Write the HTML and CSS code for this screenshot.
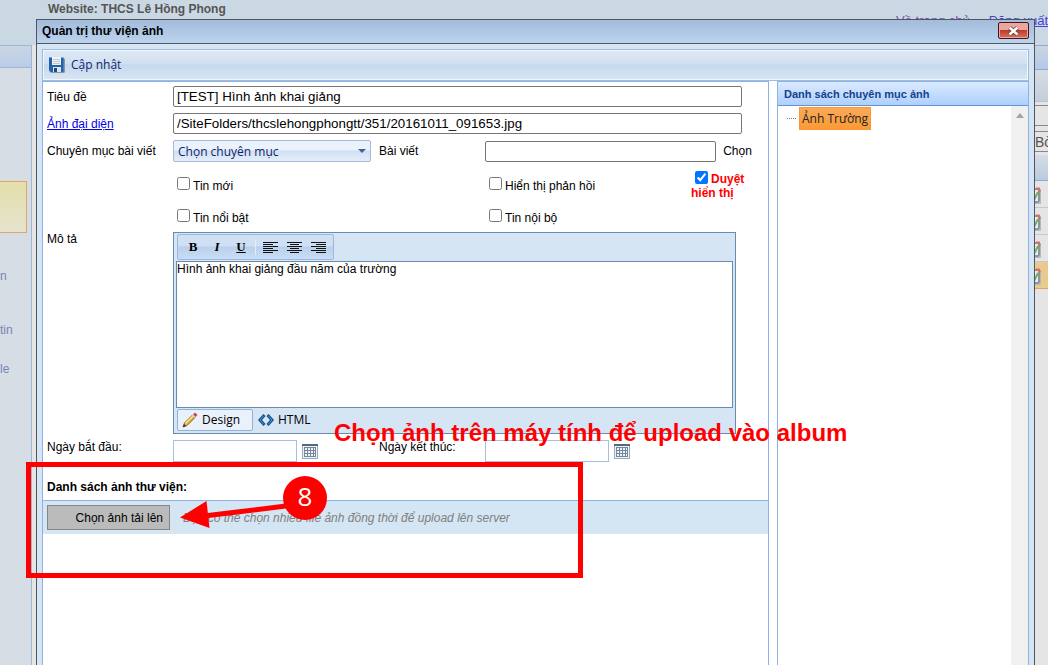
FILE: index.html
```html
<!DOCTYPE html>
<html lang="vi">
<head>
<meta charset="utf-8">
<title>Quản trị thư viện ảnh</title>
<meta name="viewport" content="width=device-width, initial-scale=1">
<link rel="stylesheet" href="styles.css">
</head>
<body>
<svg width="0" height="0" class="defs" aria-hidden="true">
  <defs>
    <symbol id="calendar" viewBox="0 0 16 15">
      <rect x="0.5" y="0.5" width="15" height="14" fill="#eef2f7" stroke="#9aabbd"/>
      <path d="M0 1h16" stroke="#54687f" stroke-width="2"/>
      <path d="M2 3.500h12M2 6.500h12M2 9.500h12M2 12.500h12M2.500 3v10M5.500 3v10M8.500 3v10M11.500 3v10M13.500 3v10" stroke="#75879a" fill="none"/>
    </symbol>
    <symbol id="edit" viewBox="0 0 18 18">
      <rect x="3" y="3" width="11" height="13" rx="1" fill="#e9edf2" stroke="#8c949e" stroke-width="2"/>
      <path d="M15.500 4v13.500H6" fill="none" stroke="#b4b8be"/>
      <path d="M8 10l2 2 3-6" fill="none" stroke="#6fb557" stroke-width="2"/>
      <path d="M11 2.500h3l1 3" fill="none" stroke="#d9705c" stroke-width="2"/>
    </symbol>
  </defs>
</svg>

<div class="page">
  <header class="page-head">
    <span class="site">Website: THCS Lê Hồng Phong</span>
    <nav class="page-nav">
      <a class="visited" href="#">Về trang chủ</a>
      <a href="#">Đăng xuất</a>
    </nav>
  </header>
  <div class="page-body">
    <aside class="side">
      <div class="side-head"></div>
      <div class="side-active"></div>
      <ul class="side-menu">
        <li><a href="#">n</a></li>
        <li><a href="#">tin</a></li>
        <li><a href="#">le</a></li>
      </ul>
    </aside>
    <main class="list">
      <div class="list-head"></div>
      <div class="list-tools"></div>
      <div class="list-box"></div>
      <button class="list-button" type="button">Bở</button>
      <div class="list-cols"></div>
      <div class="list-row"><svg width="18" height="18"><use href="#edit"/></svg></div>
      <div class="list-row"><svg width="18" height="18"><use href="#edit"/></svg></div>
      <div class="list-row"><svg width="18" height="18"><use href="#edit"/></svg></div>
      <div class="list-row selected"><svg width="18" height="18"><use href="#edit"/></svg></div>
    </main>
  </div>
</div>

<section class="dialog" role="dialog" aria-labelledby="dialog-title">
  <div class="titlebar">
    <h1 id="dialog-title">Quản trị thư viện ảnh</h1>
    <button class="close" type="button" aria-label="Đóng">
      <svg width="13" height="10" viewBox="0 0 13 10"><path d="M2.500 1.500l8 7M10.500 1.500l-8 7" stroke="#6b3535" stroke-width="4"/><path d="M2.500 1.500l8 7M10.500 1.500l-8 7" stroke="#fff" stroke-width="2.500"/></svg>
    </button>
  </div>
  <div class="dialog-body">
    <div class="toolbar">
      <button class="save" type="button">
        <svg width="16" height="16" viewBox="0 0 16 16"><path d="M1 1h13l2 1v13l-1 1H2l-2-2V2z" fill="#8a96a6"/><path d="M0 0.500h14.500V15H2l-2-2z" fill="#1f62ad"/><path d="M3 0h9v8H3z" fill="#f1f2f3"/><path d="M4 2.500h7M4 4.500h7M4 6.500h7" stroke="#c5c9ce"/><path d="M4 10h8v5H4z" fill="#dce6f0"/><path d="M5 11h3v4H5z" fill="#214a7b"/></svg>
        Cập nhật
      </button>
    </div>
    <div class="columns">
      <form class="main-pane">
        <div class="fields">
          <label for="title">Tiêu đề</label>
          <input id="title" class="text wide" type="text" value="[TEST] Hình ảnh khai giảng">

          <a href="#">Ảnh đại diện</a>
          <input class="text wide" type="text" aria-label="Ảnh đại diện" value="/SiteFolders/thcslehongphongtt/351/20161011_091653.jpg">

          <label for="category">Chuyên mục bài viết</label>
          <div class="combo">
            <select id="category"><option>Chọn chuyên mục</option></select>
          </div>
          <label for="post">Bài viết</label>
          <div class="pick">
            <input id="post" class="text" type="text">
            <button class="plain" type="button">Chọn</button>
          </div>
        </div>

        <div class="checks">
          <label class="option"><input type="checkbox">Tin mới</label>
          <label class="option"><input type="checkbox">Hiển thị phản hồi</label>
          <label class="approve"><input type="checkbox" checked>Duyệt hiển thị</label>
          <label class="option"><input type="checkbox">Tin nổi bật</label>
          <label class="option"><input type="checkbox">Tin nội bộ</label>
        </div>

        <div class="fields bottom">
          <label for="desc">Mô tả</label>
          <div class="editor">
            <div class="editor-tools">
              <button type="button" class="bold">B</button>
              <button type="button" class="italic">I</button>
              <button type="button" class="under">U</button>
              <span class="sep"></span>
              <button type="button" aria-label="Căn trái"><svg width="15" height="11"><path d="M0 .5h15M0 2.500h10M0 4.500h15M0 6.500h10M0 8.500h15M0 10.500h10" stroke="#111"/></svg></button>
              <button type="button" aria-label="Căn giữa"><svg width="15" height="11"><path d="M0 .5h15M3 2.500h9M0 4.500h15M3 6.500h9M0 8.500h15M3 10.500h9" stroke="#111"/></svg></button>
              <button type="button" aria-label="Căn phải"><svg width="15" height="11"><path d="M0 .5h15M5 2.500h10M0 4.500h15M5 6.500h10M0 8.500h15M5 10.500h10" stroke="#111"/></svg></button>
            </div>
            <textarea id="desc">Hình ảnh khai giảng đầu năm của trường</textarea>
            <div class="modes">
              <button type="button" class="mode active">
                <svg width="16" height="16" viewBox="0 0 16 16"><path d="M1 15l1.500-4 8-8 2.500 2.500-8 8z" fill="#e9ab32" stroke="#8b6426"/><path d="M3.500 11.500l8-8" stroke="#ffe394" stroke-width="1.500"/><path d="M1 15l1-3 2 2z" fill="#333"/><path d="M11 2.500l2-2 2.500 2.500-2 2z" fill="#cf4050"/><path d="M10.500 3l2.500 2.500" stroke="#c8d1da" stroke-width="1.500"/></svg>
                Design
              </button>
              <button type="button" class="mode">
                <svg width="16" height="12" viewBox="0 0 16 12"><path d="M6.500 1L2 6l4.500 5M9.500 1L14 6l-4.500 5" fill="none" stroke="#174f83" stroke-width="3"/><path d="M6 1.500L2 6l4 4.500M10 1.500L14 6l-4 4.500" fill="none" stroke="#37a0dc"/></svg>
                HTML
              </button>
            </div>
          </div>

          <label for="start">Ngày bắt đầu:</label>
          <div class="date">
            <input id="start" type="text">
            <button type="button" aria-label="Mở lịch"><svg width="16" height="15"><use href="#calendar"/></svg></button>
          </div>
          <label for="end">Ngày kết thúc:</label>
          <div class="date">
            <input id="end" type="text">
            <button type="button" aria-label="Mở lịch"><svg width="16" height="15"><use href="#calendar"/></svg></button>
          </div>
        </div>

        <h2>Danh sách ảnh thư viện:</h2>
        <div class="upload">
          <button type="button">Chọn ảnh tải lên</button>
          <em>Bạn có thể chọn nhiều file ảnh đồng thời để upload lên server</em>
        </div>
      </form>

      <aside class="tree-pane">
        <h2>Danh sách chuyên mục ảnh</h2>
        <div class="tree">
          <ul><li><a href="#">Ảnh Trường</a></li></ul>
          <div class="scroll"><svg width="8" height="5"><path d="M0 5l4-5 4 5z" fill="#a3a3a3"/></svg></div>
        </div>
      </aside>
    </div>
  </div>
</section>

<div class="note-frame"></div>
<svg class="note-arrow" width="106" height="30" viewBox="0 0 106 30"><path d="M24 15L106 5" stroke="#f00" stroke-width="5"/><path d="M0 16.500L26.500 0l3 27z" fill="#f00"/></svg>
<div class="note-number">8</div>
<p class="note-text">Chọn ảnh trên máy tính để upload vào album</p>
</body>
</html>
```
FILE: styles.css
```css
* { box-sizing: border-box; }

body {
  margin: 0;
  height: 100vh;
  overflow: hidden;
  position: relative;
  font: 12px/14px "Liberation Sans", Arial, sans-serif;
  color: #000;
  background: #e5e5e5;
}

h1, h2, ul, p { margin: 0; padding: 0; list-style: none; }
button, select, textarea { font: inherit; color: inherit; margin: 0; }
button { padding: 0; border: 0; background: none; }
svg { display: block; }
.defs { position: absolute; }

/* Page behind the dialog */
.page { display: flex; flex-direction: column; height: 100%; }
.page-head {
  display: flex;
  justify-content: space-between;
  height: 45px;
  padding-left: 48px;
  background: #cad8e4;
}
.site { padding-top: 2px; font-weight: bold; color: #555; }
.page-nav { display: flex; gap: 19px; padding-top: 14px; font-size: 13px; }
.page-nav a { color: #4a3fd6; white-space: nowrap; }
.page-nav .visited { color: #7a4fa8; }
.page-body { display: flex; flex: 1; justify-content: space-between; }
.side {
  width: 32px;
  background: #d6dde4;
  border-right: 1px solid #9db7d8;
}
.side-head {
  height: 23px;
  border: solid #9db7d8;
  border-width: 1px 0;
  background: linear-gradient(#cbd5e3, #b9cde9);
}
.side-active {
  width: 27px;
  height: 52px;
  margin-top: 113px;
  border: 1px solid #e5a365;
  border-left: 0;
  background: linear-gradient(#e5dfab, #e4e3cd);
}
.side-menu { padding-top: 36px; }
.side-menu li { padding-bottom: 25px; }
.side-menu li:first-child { padding-bottom: 40px; }
.side-menu a { color: #7485b8; text-decoration: none; }

.list { width: 13px; overflow: hidden; }
.list > * { width: 60px; }
.list-head { height: 25px; border: solid #8eabd3; border-width: 1px 0; background: linear-gradient(#cbd5e3, #b4c9e6); }
.list-tools { height: 32px; border-bottom: 1px solid #b9bfd0; background: linear-gradient(#d7dce4, #c2cfdb); }
.list-box { height: 21px; margin-top: 3px; border: 1px solid #888; border-left: 0; }
.list-button {
  display: block;
  height: 21px;
  margin: 5px 0 3px;
  border: solid #888;
  border-width: 1px 0;
  font-size: 14px;
  text-align: left;
  color: #555;
}
.list-cols { height: 26px; border-bottom: 1px solid #8eabd3; background: linear-gradient(#d7dce4, #b9cbe0); }
.list-row { height: 27px; padding-top: 5px; border-bottom: 1px solid #c6c8d8; }
.list-row svg { margin-left: -10px; }
.list-row.selected { border-color: #e5a365; background: linear-gradient(#e8c98f, #e7cc8b); }

/* Dialog */
.dialog {
  position: absolute;
  inset: 19px 13px 0 36px;
  display: flex;
  flex-direction: column;
  border: 1px solid #50565e;
  border-bottom: 0;
  background: #d5e5f3;
}
.titlebar {
  display: flex;
  justify-content: space-between;
  align-items: center;
  height: 24px;
  padding: 0 5px 2px;
  border-bottom: 1px solid #50565e;
  background: linear-gradient(#a3bcda, #bcd3ee);
}
.titlebar h1 { font-size: 12px; }
.close {
  display: grid;
  place-items: center;
  width: 31px;
  height: 17px;
  border: 1px solid #4e1019;
  border-radius: 2px;
  background: linear-gradient(#e9a79f 45%, #bb3e2c 50%, #d8735f);
  box-shadow: inset 0 0 0 1px #e8aaa0;
}
.dialog-body { display: flex; flex: 1; flex-direction: column; min-height: 0; padding: 5px 5px 0; }
.toolbar {
  height: 32px;
  padding-left: 6px;
  border: 1px solid #9ebbe0;
  background: linear-gradient(#dde8f5, #d2e0f1 45%, #c5d8ed 50%, #d8e7f5);
  box-shadow: inset 0 0 0 1px #f2f7fc;
}
.save {
  display: flex;
  align-items: center;
  gap: 6px;
  height: 30px;
  font: 12px/16px "Open Sans", "Noto Sans", sans-serif;
  color: #10236b;
}
.columns { display: flex; flex: 1; gap: 8px; min-height: 0; background: #fff; }
.main-pane { flex: 1; min-width: 0; border: 1px solid #8db2e3; border-bottom: 0; }

.fields {
  display: grid;
  grid-template-columns: 126px 198px 114px 1fr;
  row-gap: 6px;
  padding: 4px 26px 0 4px;
}
.fields > label, .fields > a { padding-top: 4px; line-height: 14px; white-space: nowrap; }
.fields a { color: #00e; justify-self: start; }
.fields label[for="post"], .fields label[for="end"] { padding-left: 8px; }
.text {
  min-width: 0;
  height: 21px;
  margin: 0;
  padding: 0 3px;
  border: 1px solid #767676;
  border-radius: 2px;
  background: #fff;
  font-family: inherit;
}
.wide { grid-column: 2 / -1; }
.combo { position: relative; height: 22px; }
.combo select {
  appearance: none;
  width: 100%;
  height: 22px;
  padding: 1px 4px 0;
  border: 1px solid #a4bbdb;
  border-radius: 2px;
  background: linear-gradient(#eaf2fc 45%, #d0dff3 50%, #e5eefa);
  font: 12px/20px "Open Sans", "Noto Sans", sans-serif;
  color: #10236b;
}
.combo::after {
  content: "";
  position: absolute;
  top: 9px;
  right: 5px;
  border: solid transparent;
  border-width: 4px 4px 0;
  border-top-color: #4b5f91;
}
.pick { display: flex; gap: 7px; align-items: center; margin-right: -10px; }
.pick .text { flex: 1; }
.plain { width: 29px; }

.checks {
  display: grid;
  grid-template-columns: 312px 202px 60px;
  row-gap: 10px;
  padding: 9px 0 0 134px;
}
.checks label { line-height: 14px; }
.checks input { width: 13px; height: 13px; margin: 0 3px 0 0; vertical-align: -1px; }
.checks .option { padding-top: 6px; }
.checks .option input { vertical-align: 0; }
.checks .approve { height: 22px; color: #f00; font-weight: bold; }
.checks .approve input { margin-left: 4px; }

.bottom { padding-top: 7px; }
.bottom > label { padding-top: 0; }
.editor {
  grid-column: 2 / -1;
  margin-right: 6px;
  padding: 1px 2px 2px;
  border: 1px solid #688caf;
  background: #d6e5f4;
}
.editor-tools {
  display: inline-flex;
  align-items: center;
  height: 26px;
  padding: 0 3px;
  margin: 0 0 1px 1px;
  border: 1px solid #9db7e0;
  border-radius: 2px;
  background: linear-gradient(#cfdff4 45%, #bbd0ec 50%, #c8dcf4);
  vertical-align: top;
}
.editor-tools button {
  display: grid;
  place-items: center;
  width: 24px;
  height: 22px;
  font: bold 13px/16px "Liberation Serif", serif;
}
.editor-tools .italic { font-style: italic; }
.editor-tools .under { text-decoration: underline; }
.sep { width: 1px; height: 16px; margin: 0 2px; background: #e2edfa; }
.editor textarea {
  display: block;
  width: 100%;
  height: 147px;
  padding: 0;
  border: 1px solid #688caf;
  resize: none;
  outline: 0;
  background: #fff;
}
.modes { display: flex; gap: 3px; padding: 1px 1px 0; }
.mode {
  display: flex;
  align-items: center;
  gap: 4px;
  height: 22px;
  padding: 0 1px;
  border: 1px solid transparent;
  border-radius: 2px;
  font: 12px/16px "Open Sans", "Noto Sans", sans-serif;
}
.mode.active { width: 76px; padding: 0 4px; border-color: #94afd8; background: #e9f1fb; }
.date { display: flex; align-items: center; gap: 5px; }
.date input { width: 124px; height: 22px; margin: 0; border: 1px solid #a8bfde; background: #fff; }

.main-pane h2 { padding: 18px 4px 5px; font-size: 12px; line-height: 15px; }
.upload {
  display: flex;
  align-items: center;
  gap: 13px;
  height: 34px;
  padding: 0 4px;
  border-top: 1px solid #8db2e3;
  background: #d4e5f3;
}
.upload button {
  width: 123px;
  height: 25px;
  padding-right: 6px;
  border: 1px solid #858585;
  background: #bbb;
  text-align: right;
}
.upload em { color: #808080; white-space: nowrap; }

.tree-pane {
  display: flex;
  flex-direction: column;
  width: 252px;
  border: 1px solid #8db2e3;
  border-bottom: 0;
}
.tree-pane h2 {
  height: 24px;
  padding-left: 6px;
  border-bottom: 1px solid #6593cf;
  background: linear-gradient(#dbeaff, #add0ff);
  font-size: 11px;
  line-height: 24px;
  color: #15428b;
}
.tree { display: flex; flex: 1; justify-content: space-between; }
.tree li { display: flex; padding: 1px 0 0 9px; }
.tree li::before { content: ""; width: 9px; height: 11px; margin-right: 3px; border-bottom: 1px dotted #777; }
.tree a {
  height: 23px;
  padding: 0 2px;
  border: 1px solid #f79a36;
  background: linear-gradient(#f9aa58, #fc9a34);
  font: 12px/21px "Open Sans", "Noto Sans", sans-serif;
  color: #222;
  text-decoration: none;
}
.scroll { display: flex; justify-content: center; width: 17px; padding-top: 7px; background: #f0f0f0; }

/* Annotations drawn over the dialog */
.note-frame, .note-arrow, .note-number, .note-text { position: absolute; }
.note-frame { left: 26px; top: 462px; width: 557px; height: 116px; border: 5px solid #f00; }
.note-arrow { left: 180px; top: 501px; }
.note-number {
  left: 283px;
  top: 476px;
  width: 44px;
  height: 44px;
  border-radius: 50%;
  background: #f00;
  color: #fff;
  font: 26px/41px "Open Sans", sans-serif;
  text-align: center;
}
.note-text {
  left: 334px;
  top: 418px;
  color: #f00;
  font-size: 24px;
  line-height: 30px;
  font-weight: bold;
  white-space: nowrap;
}
```
